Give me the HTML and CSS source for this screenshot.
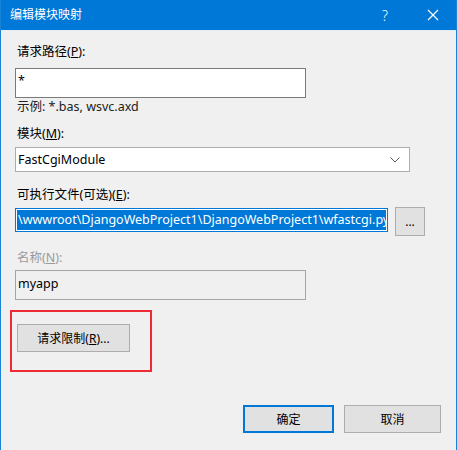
FILE: index.html
```html
<!DOCTYPE html>
<html lang="zh-CN">
  <head>
    <meta charset="UTF-8" />
    <meta name="viewport" content="width=device-width, initial-scale=1.0" />
    <title>编辑模块映射</title>
    <link rel="stylesheet" href="styles.css">
  </head>
  <body>
    <div class="window">
      <header class="titlebar">
        <span class="title">编辑模块映射</span>
        <span class="caption-btn help">?</span>
        <span class="caption-btn close">
          <svg width="12" height="12" viewBox="0 0 12 12">
            <path d="M1 1 L11 11 M11 1 L1 11" stroke="#fff" stroke-width="1.2" fill="none" />
          </svg>
        </span>
      </header>
      <main class="content">
        <p class="label first">请求路径(<u>P</u>):</p>
        <div class="textbox path">*</div>
        <p class="hint">示例: *.bas, wsvc.axd</p>

        <p class="label module">模块(<u>M</u>):</p>
        <div class="combo">
          <span>FastCgiModule</span>
          <svg width="10" height="6" viewBox="0 0 10 6">
            <path d="M0.5 0.5 L5 5 L9.5 0.5" stroke="#555" stroke-width="1" fill="none" />
          </svg>
        </div>

        <p class="label exec">可执行文件(可选)(<u>E</u>):</p>
        <div class="exec-row">
          <div class="textbox focused">
            <span class="selected">\wwwroot\DjangoWebProject1\DjangoWebProject1\wfastcgi.py</span>
          </div>
          <button class="btn browse">...</button>
        </div>

        <p class="label name disabled">名称(<u>N</u>):</p>
        <div class="textbox readonly">myapp</div>

        <div class="mark">
          <button class="btn limits">请求限制(<u>R</u>)...</button>
        </div>

        <footer class="actions">
          <button class="btn ok">确定</button>
          <button class="btn cancel">取消</button>
        </footer>
      </main>
    </div>
  </body>
</html>
```

FILE: styles.css
```css
* {
  margin: 0;
  padding: 0;
  box-sizing: border-box;
}

body {
  font-family: "Noto Sans", "Noto Sans CJK SC", sans-serif;
  font-size: 12.5px;
  color: #000;
  background-color: #f0f0f0;
}

/* WINDOW */
.window {
  width: 457px;
  height: 450px;
  border-left: 1px solid #1883d7;
  border-right: 1px solid #1883d7;
  display: flex;
  flex-direction: column;
}

.titlebar {
  height: 31px;
  background-color: #0078d7;
  color: #fff;
  display: flex;
  align-items: center;
  border-bottom: 1px solid #e3eef9;
}

.title {
  flex: 1;
  padding-left: 9px;
  line-height: 16px;
  font-size: 12px;
}

.caption-btn {
  width: 46px;
  height: 30px;
  display: flex;
  align-items: center;
  justify-content: center;
  font-size: 14px;
  font-weight: 300;
}

.help {
  margin-right: 2px;
}

/* FORM */
.content {
  padding: 0 15px 0 14px;
  display: flex;
  flex-direction: column;
}

.label,
.hint {
  line-height: 16px;
  padding-left: 2px;
}

.label.first {
  margin-top: 13px;
}

.label.module {
  margin-top: 11px;
}

.label.exec {
  margin-top: 15px;
}

.label.name {
  margin-top: 14px;
}

.disabled {
  color: #9a9a9a;
}

.hint {
  margin-top: 1px;
  color: #222;
}

.textbox {
  width: 291px;
  height: 30px;
  border: 1px solid #7a7a7a;
  background-color: #fff;
  padding: 4px 2px;
  line-height: 16px;
}

.textbox.path {
  margin-top: 8px;
}

.textbox.readonly {
  margin-top: 4px;
  border-color: #a5a5a5;
  background-color: #f0f0f0;
  padding-top: 5px;
}

.combo {
  margin-top: 5px;
  width: 395px;
  height: 25px;
  border: 1px solid #adadad;
  background-color: #fff;
  display: flex;
  align-items: center;
  justify-content: space-between;
  padding: 0 9px 0 2px;
}

.exec-row {
  margin-top: 4px;
  display: flex;
  align-items: flex-start;
  gap: 7px;
}

.textbox.focused {
  width: 373px;
  height: 24px;
  margin-top: 1px;
  border-color: #0078d7;
  padding: 1px;
  overflow: hidden;
  white-space: nowrap;
}

.selected {
  display: block;
  height: 20px;
  line-height: 20px;
  background-color: #0078d7;
  color: #fff;
  padding-left: 1px;
}

/* BUTTONS */
.btn {
  font-family: inherit;
  font-size: 12px;
  color: #000;
  background-color: #e1e1e1;
  border: 1px solid #adadad;
  cursor: pointer;
}

.btn:hover {
  background-color: #e5f1fb;
}

.browse {
  width: 30px;
  height: 29px;
  line-height: 10px;
}

.mark {
  margin-top: 10px;
  margin-left: -5px;
  width: 142px;
  height: 62px;
  border: 2px solid #ee2b35;
  padding: 12px 0 0 5px;
}

.limits {
  width: 113px;
  height: 28px;
}

.actions {
  margin-top: 33px;
  display: flex;
  justify-content: flex-end;
  gap: 10px;
}

.ok {
  width: 91px;
  height: 28px;
  border: 2px solid #0078d7;
}

.cancel {
  width: 97px;
  height: 28px;
}
```
